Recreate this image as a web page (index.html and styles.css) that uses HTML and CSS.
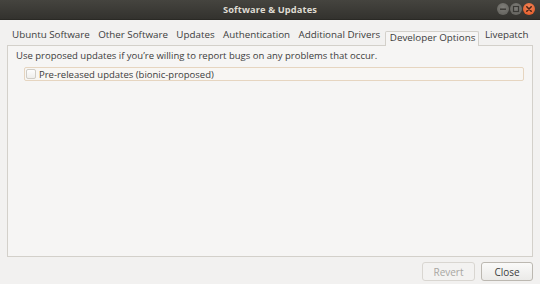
FILE: index.html
```html
<!DOCTYPE html>
<html>
<head>
<meta charset="utf-8">
<link rel="stylesheet" href="styles.css">
</head>
<body>
<div class="window">
  <div class="titlebar">
    <span class="title">Software &amp; Updates</span>
    <div class="wbtns">
      <span class="wbtn min"><svg width="12" height="12" viewBox="0 0 12 12"><rect x="3" y="5.5" width="6" height="1.4" fill="#3a3935"/></svg></span>
      <span class="wbtn max"><svg width="12" height="12" viewBox="0 0 12 12"><rect x="3.5" y="3.5" width="5" height="5" fill="none" stroke="#3a3935" stroke-width="1.2"/></svg></span>
      <span class="wbtn close"><svg width="12" height="12" viewBox="0 0 12 12"><path d="M3.8 3.8L8.2 8.2M8.2 3.8L3.8 8.2" stroke="#4a2416" stroke-width="1.6" stroke-linecap="round"/></svg></span>
    </div>
  </div>
  <div class="content">
    <div class="tabs">
      <span class="tab">Ubuntu Software</span>
      <span class="tab">Other Software</span>
      <span class="tab">Updates</span>
      <span class="tab">Authentication</span>
      <span class="tab">Additional Drivers</span>
      <span class="tab active">Developer Options</span>
      <span class="tab last">Livepatch</span>
    </div>
    <div class="page">
      <div class="desc">Use proposed updates if you’re willing to report bugs on any problems that occur.</div>
      <label class="checkrow"><span class="check"></span><span>Pre-released updates (bionic-proposed)</span></label>
    </div>
    <div class="actions">
      <button class="btn disabled">Revert</button>
      <button class="btn">Close</button>
    </div>
  </div>
</div>
</body>
</html>
```
FILE: styles.css
```css
html, body { margin: 0; padding: 0; }
* { box-sizing: border-box; }
body {
  width: 540px; height: 284px; overflow: hidden;
  font-family: "Open Sans", "DejaVu Sans", sans-serif;
  font-size: 9.5px;
  color: #3c3c3c;
  background: #f2f1f0;
}
.window { display: flex; flex-direction: column; height: 284px; }
.titlebar {
  height: 20px; flex: none;
  background: linear-gradient(#45443f, #33322e);
  display: flex; align-items: center; justify-content: center;
  position: relative;
  border-bottom: 1px solid #2a2925;
}
.title { color: #dfdbd2; font-weight: bold; font-size: 9.3px; letter-spacing: 0.1px; }
.wbtns { position: absolute; right: 5px; top: 3px; display: flex; gap: 1px; }
.wbtn {
  width: 12px; height: 12px; border-radius: 50%;
  background: radial-gradient(circle at 50% 35%, #7f7e79, #5e5d58);
  display: flex;
}
.wbtn.close { background: radial-gradient(circle at 50% 35%, #f3865a, #e0531f); }
.content { flex: 1; display: flex; flex-direction: column; padding: 0 7px 0 7px; }
.tabs {
  display: flex; align-items: flex-end; height: 25px; flex: none;
  white-space: nowrap; padding-left: 1px;
  font-size: 9.8px;
}
.tab { padding: 0 4.2px 3px; line-height: 14px; }
.tab:first-child { padding-left: 4px; }
.tab.last { padding-left: 6px; }
.tab.active {
  background: #f6f5f4;
  border: 1px solid #d3d0ca; border-bottom: none;
  border-radius: 2px 2px 0 0;
  height: 15px; line-height: 12px; padding: 0 2.5px 0 3.5px;
  margin-bottom: -1px; margin-left: 1px; position: relative; z-index: 1;
}
.page {
  height: 212px; flex: none;
  border: 1px solid #d3d0ca;
  background: #f6f5f4;
  padding: 3px 8px 0 8px;
}
.desc { line-height: 14px; white-space: nowrap; }
.checkrow {
  display: flex; align-items: center; gap: 3px;
  margin: 4px 0 0 8px; width: 500px; height: 14px;
  border: 1px solid #e6d5c0; border-radius: 2px;
  background: #f8f6f3;
  padding-left: 1px;
}
.check {
  width: 10px; height: 10px; border: 1px solid #cfccc6; border-radius: 2px;
  background: linear-gradient(#fdfdfd, #efeeec);
}
.actions { display: flex; justify-content: flex-end; gap: 6px; padding: 5px 0 0 0; }
.btn {
  font: inherit; font-size: 10px; color: #3c3c3c;
  height: 19px; padding: 0;
  border: 1px solid #bcb8b1; border-radius: 3px;
  background: linear-gradient(#fafaf9, #ebeae8);
}
.btn.disabled { width: 53px; color: #a8a6a2; border-color: #d9d6d1; background: #f3f2f1; }
.btn:last-child { width: 52px; }
```
